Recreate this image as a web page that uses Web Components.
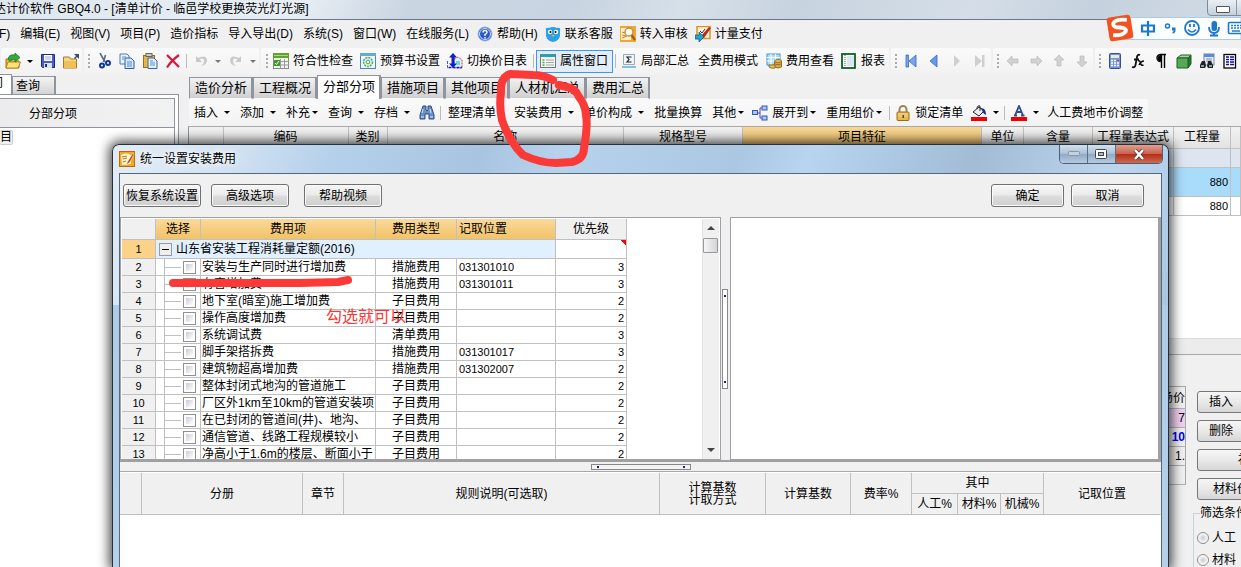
<!DOCTYPE html>
<html lang="zh-CN">
<head>
<meta charset="utf-8">
<title>GBQ4.0</title>
<style>
html,body{margin:0;height:100%;overflow:hidden;background:#f0f0f0}
body{font:12px/16px "Liberation Sans","Noto Sans CJK SC",sans-serif;color:#000}
</style>
</head>
<body>
<budget-app></budget-app>
<script>
const RESET = `*{box-sizing:border-box}button{font:inherit;color:inherit;margin:0;padding:0;border:0;background:none;white-space:nowrap}`;
const define = (name, html) => customElements.define(name, class extends HTMLElement {
  constructor() {
    super();
    this.attachShadow({mode: 'open'});
  }
  connectedCallback() {
    if (this.shadowRoot.childNodes.length) return;
    const t = document.createElement('template');
    t.innerHTML = `<style>${RESET}</style>` + (typeof html === 'function' ? html(this) : html);
    this.shadowRoot.append(t.content.cloneNode(true));
  }
});

/* 16x16 glyph set */
const G = {
open:'<path d="M1 6h5l1 2h7v7H1z" fill="#e9b93a" stroke="#a87414"/><path d="M3 9h12.500l-2.500 6H1z" fill="#ffe27a" stroke="#b8851c"/><path d="M3 6q1-5 7-4V0l5 4.500-5 4.500V6.500q-4-1-5 2z" fill="#2fae3a" stroke="#0b6b18" stroke-width=".7"/>',
save:'<path d="M1.500 1.500h13v13h-12l-1-1z" fill="#4a5cc8" stroke="#1e2a80"/><rect x="4" y="2" width="8" height="6" fill="#fff"/><path d="M5 4h6M5 6h6" stroke="#9aa8d8"/><rect x="4" y="10" width="8" height="5" fill="#dfe4f4"/><rect x="5" y="11" width="2" height="3" fill="#1e2a80"/>',
folder:'<path d="M0.500 4h6l1 2h6v9h-13z" fill="#f6d67e" stroke="#a07c30"/><path d="M1 8h12v7H1z" fill="#f0bf56"/><path d="M11 1h5v5l-2-2-2 2-1-1 2-2z" fill="#3a4a70"/>',
cut:'<path d="M4 0l5 9M9.500 2L7.500 9" stroke="#5a6a88" stroke-width="1.600"/><circle cx="6" cy="12.500" r="2" fill="none" stroke="#123a9a" stroke-width="2"/><circle cx="12" cy="10" r="2" fill="none" stroke="#123a9a" stroke-width="2"/>',
copy:'<path d="M1 1h7l2 2v8H1z" fill="#eaf2fd" stroke="#4a78b8"/><path d="M6 5h6l3 3v7.500H6z" fill="#d6e6fa" stroke="#2e5ea8"/><path d="M3 4h4M3 6h2M8 9h5M8 11h5M8 13h5" stroke="#5a8ed0"/>',
paste:'<rect x="1.500" y="2.500" width="11" height="12" fill="#e8b83c" stroke="#96701a"/><rect x="4" y="0.500" width="6" height="3" fill="#ccc" stroke="#666"/><path d="M6 5h6l3 3v7.500H6z" fill="#e4eefb" stroke="#3a66a8"/><path d="M8 8h3M8 10h5M8 12h5" stroke="#5a8ed0"/>',
del:'<path d="M2 2l12 12M14 2Q6 8 2 14.500" stroke="#d8183a" stroke-width="2.200" fill="none"/>',
undo:'<path d="M3 3v6h6L6.500 6.500Q11 4 11 8q0 3-3 5 6-1 6-6Q13 1 5 5z" fill="#c9c9c9"/>',
redo:'<path d="M13 3v6H7l2.500-2.500Q5 4 5 8q0 3 3 5-6-1-6-6Q3 1 11 5z" fill="#c9c9c9"/>',
check:'<rect x=".5" y=".5" width="15" height="15" fill="#f4f4f4" stroke="#888"/><rect width="16" height="5" fill="#5aa82a"/><path d="M1 2.500h14" stroke="#a8d880"/><path d="M1 8.500h15M1 12h15M7.500 6v10M11.500 6v10" stroke="#999"/><rect x="1" y="7" width="6" height="6" fill="#3c9a28"/><path d="M2 10l1.500 1.500L6 8" stroke="#fff" fill="none"/>',
gear:'<rect x=".5" y=".5" width="15" height="15" fill="#eef6fb" stroke="#4a88c0"/><rect width="16" height="3" fill="#68a8dc"/><circle cx="8" cy="9" r="4.500" fill="#d8f0d8" stroke="#58a868" stroke-width="1.500" stroke-dasharray="2 1"/><circle cx="8" cy="9" r="1.800" fill="#fff" stroke="#58a868"/>',
swap:'<path d="M7 6l4-2 4 3v8H7z" fill="#d8fafa" stroke="#e03050" stroke-dasharray="2 1"/><path d="M6 0l4 4.500H7.500v6H10l-4 4.500-4-4.500h2.500v-6H2z" fill="#1020c8"/><path d="M0 8v6.500h15" fill="none" stroke="#1020c8" stroke-width="1.500" stroke-dasharray="3 1"/><path d="M9 9h4M9 11h4" stroke="#18a8c8"/>',
prop:'<rect x=".5" y="1.500" width="15" height="13" fill="#f8f8f0" stroke="#777"/><rect x="1" y="1" width="14" height="3" fill="#28a0b8"/><path d="M2.500 7h2M2.500 9.500h2M2.500 12h2" stroke="#50a850" stroke-width="1.500"/><path d="M6 7h8M6 9.500h8M6 12h8" stroke="#9aa"/>',
sum:'<path d="M2.500 1.500h11v10h-11z" fill="#eef4f8" stroke="#9ab"/><path d="M1 14h14" stroke="#88c0d8" stroke-width="2"/><path d="M10.500 4H6l2 2.500L6 9h4.500" fill="none" stroke="#222" stroke-width="1.200"/>',
fee:'<rect x="1" y="1" width="13" height="11" fill="#a8e0f4" stroke="#4898c8"/><path d="M1 4.500h13M1 8h13M5 1v11M9.500 1v11" stroke="#fff"/><path d="M8.500 8v6q3.500 2 7 0V8" fill="#d8a848" stroke="#987020"/><ellipse cx="12" cy="8" rx="3.500" ry="1.500" fill="#e8c060" stroke="#987020"/><path d="M9 11q3 1.500 6 0" fill="none" stroke="#987020"/><path d="M3 12v2q3 2 6 1v-3z" fill="#e8c060" stroke="#987020"/>',
report:'<rect x="1" y="1" width="13" height="14" fill="#fff" stroke="#0f6020" stroke-width="1.800"/><path d="M4 2v12" stroke="#2a7a4a" stroke-dasharray="1 1"/><path d="M6 4h7M6 6h7M6 8h7M6 10h7M6 12h7" stroke="#b8cce0"/>',
first:'<path d="M3 2h2.500v12H3zM13 2v12L6 8z" fill="#7aa4ec" stroke="#3468c8" stroke-width=".8"/>',
prev:'<path d="M11 2v12L4 8z" fill="#6a98e8" stroke="#3468c8" stroke-width=".8"/>',
next:'<path d="M5 2v12l6-6z" fill="#cfcfcf"/>',
last:'<path d="M3 2v12l7-6zM10 2h2.500v12H10z" fill="#cfcfcf"/>',
al:'<path d="M2 8l5-5v3h6v4H7v3z" fill="#d2d2d2" stroke="#b4b4b4" stroke-width=".6"/>',
ar:'<path d="M14 8L9 3v3H3v4h6v3z" fill="#d2d2d2" stroke="#b4b4b4" stroke-width=".6"/>',
au:'<path d="M8 2l5 5h-3v6H6V7H3z" fill="#d2d2d2" stroke="#b4b4b4" stroke-width=".6"/>',
ad:'<path d="M8 14l5-5h-3V3H6v6H3z" fill="#d2d2d2" stroke="#b4b4b4" stroke-width=".6"/>',
calc:'<rect x="2.500" y=".5" width="11" height="15" rx="1" fill="#7a96d8" stroke="#34508c"/><rect x="4" y="2" width="8" height="3" fill="#dff0d0"/><path d="M4 7.500h8M4 10h8M4 12.500h8" stroke="#fff" stroke-width="1.500" stroke-dasharray="2 1"/><path d="M10 7.500h2" stroke="#d03050" stroke-width="1.500"/>',
fx:'<path d="M10 2Q7.500 1 7 4L5.500 12q-.5 3-3.500 2M4 6.500h5" fill="none" stroke="#111" stroke-width="1.800"/><path d="M8 8q2-1 2.500 2t3 2M14 8q-3 0-5 4" fill="none" stroke="#111" stroke-width="1.600"/>',
pil:'<path d="M13 1.500H7.500a3.500 3.500 0 000 7M8.500 2v13M11.500 2v13" fill="none" stroke="#000" stroke-width="1.400"/><path d="M8 2a3.200 3.200 0 000 6.400z"/>',
cube:'<path d="M1 5l4-3h10l-3 3z" fill="#a8d8a0" stroke="#1c6020"/><path d="M12 5l3-3v9l-3 4z" fill="#2c7430" stroke="#1c6020"/><path d="M1 5h11v10H1z" fill="#58a858" stroke="#1c6020"/>',
find:'<rect x="5" y="1" width="10" height="11" fill="#e8f0fb" stroke="#6a88b8"/><rect x="5" y="1" width="10" height="3" fill="#5a8ad8"/><path d="M7 6h6M7 8h6" stroke="#88a"/><path d="M3 8h3l1 5-1 2H1v-3zM9 8h3l2 4v3H9l-1-2z" fill="#222"/><path d="M2 13h3M10 13h3" stroke="#9cc" stroke-width="1.500"/>',
list:'<rect x="2" y="1.500" width="11.500" height="13.500" fill="#fff" stroke="#000" stroke-width="1.300"/><path d="M4 4h3M4 6.500h3M4 9h3M4 11.500h3M8 4h4M8 6.500h4M8 9h4M8 11.500h4" stroke="#101090" stroke-width="1.300"/>',
bino:'<path d="M4 1h3v4l1 1 1-1V1h3l3 9v4h-5V9H6v5H1v-4z" fill="#6a90c4" stroke="#2c4c88"/><path d="M3 8l1-4M12 8l-1-4M2 12h3M11 12h3" stroke="#dce8f8"/>',
tree:'<path d="M5 8h3M8 3v10M8 3h3M8 13h3" stroke="#44c" fill="none"/><rect x=".5" y="5.500" width="5" height="4" fill="#a8c8f4" stroke="#3858b0"/><rect x="10" y="1" width="5" height="4" fill="#a8c8f4" stroke="#3858b0"/><rect x="10" y="11" width="5" height="4" fill="#a8c8f4" stroke="#3858b0"/>',
lock:'<path d="M4.500 8V4.500a3.500 3.500 0 017 0V8" fill="none" stroke="#9a8a58" stroke-width="2"/><rect x="2" y="7" width="12" height="8.500" rx="1" fill="#e8b84c" stroke="#9a6c18"/><path d="M3 9h10M3 11h10" stroke="#fbe0a0" stroke-width=".8"/><path d="M7.500 10h1.500v3H7.500z" fill="#543"/>',
fill:'<path d="M2 7l6-5 5 4-5 5z" fill="#eee" stroke="#223"/><path d="M6 4q0-4 3-3v5" stroke="#223" fill="none"/><path d="M10 3q5 0 5 7-3-1-4-5z" fill="#1a2a98"/><rect y="12" width="16" height="4" fill="#f00000"/>',
color:'<path d="M4 10.500L8 1l4 9.500M5.500 7h5M3 10.500h3M10 10.500h3.500" fill="none" stroke="#2e4c8e" stroke-width="1.800"/><rect y="12" width="16" height="4" fill="#f00000"/>',
help:'<circle cx="8" cy="8" r="7" fill="#2858c8" stroke="#9ab4e8"/><circle cx="8" cy="8" r="5.500" fill="none" stroke="#fff" stroke-width=".8"/><path d="M6 6.500Q6 4.500 8 4.500T10 6.500Q10 7.500 8 8.500V10M8 11v1.500" fill="none" stroke="#fff" stroke-width="1.400"/>',
bird:'<path d="M1 5Q0 1 4 2q4-2 8 0 4-1 3 3v5q-1 5-7 6-6-1-7-6z" fill="#2aa0e8"/><circle cx="5" cy="6" r="2.200" fill="#fff"/><circle cx="11" cy="6" r="2.200" fill="#fff"/><circle cx="5.500" cy="6" r="1"/><circle cx="10.500" cy="6" r="1"/><path d="M6.500 9h3L8 11z" fill="#f0c020"/>',
audit:'<rect width="16" height="16" fill="#f0a830"/><path d="M1 2h10v12H1z" fill="#fff0c8"/><circle cx="9" cy="6" r="4" fill="#fffdf4" stroke="#c08840" stroke-width="1.300"/><path d="M11.500 9L15 14" stroke="#a05818" stroke-width="2.200"/><path d="M2 6l3 1M2 9l4 1M2 12l5-2" stroke="#d08020"/>',
pay:'<rect x="2" y=".5" width="13" height="12" fill="#fff4d8" stroke="#e09020" stroke-width="1.500"/><path d="M6 10L14 1l2 1-7 10z" fill="#c02818"/><path d="M0 9h4V6l5 5-5 5v-3H0z" fill="#28a0d0" stroke="#085888" stroke-width=".7"/><path d="M5 5l2 2 3-4" stroke="#333" fill="none"/>',
dlg:'<rect width="16" height="16" rx="1" fill="#f5a623"/><rect x=".5" y=".5" width="15" height="15" fill="none" stroke="#b86c08"/><path d="M2 4q5-3 10 0v9l-9 1z" fill="#fff3cf"/><path d="M3 6l5-1M4 8l4-1M4 11l3-1" stroke="#b07820"/><path d="M14 2L9 10l-2 4 4-3 4-8z" fill="#a84408" stroke="#fff" stroke-width=".5"/>'
};
const svg = n => `<svg width="16" height="16" viewBox="0 0 16 16" aria-hidden="true">${G[n]}</svg>`;

/* button of a menu bar or tool bar: optional icon, slotted label, optional drop arrow */
define('tool-item', el => `<style>
:host{display:block;flex:none}
button{display:flex;align-items:center;height:22px;padding:0 5px}
svg{display:block;flex:none}
:host([icon]) button{padding:0 4px 0 3px;gap:4px}
:host([only]) button{padding:0;width:23px;justify-content:center}
:host([bare]) button{padding:0;width:12px;justify-content:center}
i{border:3px solid transparent;border-top-color:#000;border-bottom:0;width:6px}
:host([dim]) i{border-top-color:#777}
:host([drop]) i{margin-left:6px}
:host([near]) i{margin-left:2px}
:host([icon][near]) button{gap:0;padding-right:5px}
:host([icon][near]) svg{margin-right:4px}
:host([on]) button{border:1px solid #3399ff;background:#e3edf8;height:23px}
</style><button type="button">${el.hasAttribute('icon') ? svg(el.getAttribute('icon')) : ''}${el.hasAttribute('only') || el.hasAttribute('bare') ? '' : '<span><slot></slot></span>'}${['drop','near','bare'].some(a => el.hasAttribute(a)) ? '<i></i>' : ''}</button>`);
define('tool-sep', `<style>:host{display:block;flex:none;width:5px;height:14px;border-right:2px solid transparent;border-left:2px solid transparent;background:#bbb;background-clip:padding-box}</style>`);
define('tool-group', `<style>
:host{display:flex;align-items:center;flex:none;height:100%;background:linear-gradient(#fafafa,#f2f2f2);border-radius:2px}
.g{width:8px;height:16px;flex:none;background:radial-gradient(circle at 5px 2px,#aaa 1px,transparent 1px) 0 0/8px 4px}
:host([plain]) .g{display:none}
</style><div class="g"></div><slot></slot>`);

define('app-title', `<style>
:host{display:block;position:relative;height:20px;border-bottom:1px solid #6b7785;background:linear-gradient(115deg,#dfe7ef 0,#e8eef4 24%,#c9d5e1 33%,#c8d4e1 46%,#d6e0e9 55%,#c7d3df 64%,#d5dee8 78%,#c5d1de 88%,#d2dce6);overflow:hidden}
h1{margin:0 0 0 -6px;font:inherit;line-height:18px;white-space:nowrap}
button{position:absolute;right:-20px;top:-3px;width:54px;height:19px;border:1px solid #7d8a98;border-radius:4px;background:linear-gradient(#eef3f8,#c4d0dc)}
button::before{content:"";position:absolute;left:8px;top:8px;width:12px;height:5px;border:1px solid #555;border-radius:1px;background:#fff}
button::after{content:"";position:absolute;left:28px;top:0;bottom:0;border-left:1px solid #8d99a6}
</style><h1>达计价软件 GBQ4.0 - [清单计价 - 临邑学校更换荧光灯光源]</h1><button aria-label="最小化"></button>`);

define('menu-bar', `<style>
:host{display:flex;align-items:center;height:28px;background:#f0f0f0}
nav{display:flex;margin-left:-10px}
</style><nav><tool-item>(F)</tool-item><tool-item>编辑(E)</tool-item><tool-item>视图(V)</tool-item><tool-item>项目(P)</tool-item><tool-item>造价指标</tool-item><tool-item>导入导出(D)</tool-item><tool-item>系统(S)</tool-item><tool-item>窗口(W)</tool-item><tool-item>在线服务(L)</tool-item><tool-item icon="help">帮助(H)</tool-item><tool-item icon="bird">联系客服</tool-item><tool-item icon="audit">转入审核</tool-item><tool-item icon="pay">计量支付</tool-item></nav>`);

define('main-toolbar', `<style>
:host{display:flex;align-items:center;gap:2px;height:26px;overflow:hidden;padding-left:1px}
.text{padding-left:1px}
</style>
<tool-group plain><tool-item icon="open" only></tool-item><tool-item bare></tool-item><tool-item icon="save" only></tool-item><tool-item icon="folder" only></tool-item></tool-group>
<tool-group><tool-item icon="cut" only></tool-item><tool-item icon="copy" only></tool-item><tool-item icon="paste" only></tool-item><tool-item icon="del" only></tool-item><tool-sep></tool-sep><tool-item icon="undo" only></tool-item><tool-item bare dim></tool-item><tool-item icon="redo" only></tool-item><tool-item bare dim></tool-item></tool-group>
<tool-group class="text"><tool-item icon="check">符合性检查</tool-item><tool-item icon="gear">预算书设置</tool-item><tool-item icon="swap">切换价目表</tool-item><tool-sep></tool-sep><tool-item icon="prop" on>属性窗口</tool-item><tool-sep></tool-sep><tool-item icon="sum">局部汇总</tool-item><tool-item>全费用模式</tool-item><tool-item icon="fee">费用查看</tool-item><tool-item icon="report">报表</tool-item></tool-group>
<tool-group><tool-item icon="first" only></tool-item><tool-item icon="prev" only></tool-item><tool-item icon="next" only></tool-item><tool-item icon="last" only></tool-item></tool-group>
<tool-group><tool-item icon="al" only></tool-item><tool-item icon="ar" only></tool-item><tool-item icon="au" only></tool-item><tool-item icon="ad" only></tool-item></tool-group>
<tool-group><tool-item icon="calc" only></tool-item><tool-item icon="fx" only></tool-item><tool-item icon="pil" only></tool-item><tool-item icon="cube" only></tool-item><tool-item icon="find" only></tool-item><tool-item icon="list" only></tool-item></tool-group>`);

define('side-nav', `<style>
:host{display:flex;flex-direction:column;width:179px;flex:none;padding-top:1px}
.tabs{display:flex;align-items:flex-end;height:19px}
.tabs button{height:18px;width:44px;padding-left:3px;text-align:left;background:linear-gradient(#f4f4f4,#d4d4d4);border:1px solid #8e959e;border-width:1px 2px 0 1px}
.tabs button.on{width:12px;height:20px;background:#fff;border-left:0;padding:0;border-right-width:1px;display:flex;justify-content:flex-end;padding-right:8px;overflow:hidden}
.box{flex:1;border:1px solid #8e959e;border-left:0;border-bottom:0;padding:3px 3px 0 0;background:#fff;display:flex;flex-direction:column}
h2{margin:0;font:inherit;height:30px;line-height:30px;padding-left:29px;background:linear-gradient(90deg,#ececec,#f2f2f2);border:1px solid #8e959e;border-left:0}
ul{margin:0;padding:1px 0;list-style:none;flex:1;border-right:1px solid #8e959e}
li span{display:inline-block;background:#f0f0f0;border:1px solid #ccc;border-left:0;border-radius:2px;line-height:13px}
</style><div class="tabs"><button class="on">间</button><button>查询</button></div><div class="box"><h2>分部分项</h2><ul><li><span>目</span></li></ul></div>`);

define('page-tabs', `<style>
:host{display:flex;align-items:flex-end;height:25px;font-size:13px}
button{height:22px;padding:0 4px 0 5px;background:linear-gradient(#f2f2f2,#cfcfcf);border:1px solid #8e959e;border-right-width:2px;border-bottom-color:#f8f8f8}
button.on{height:24px;background:#fff;padding-bottom:2px;border-bottom:0}
</style><button>造价分析</button><button>工程概况</button><button class="on">分部分项</button><button>措施项目</button><button>其他项目</button><button>人材机汇总</button><button>费用汇总</button>`);

define('bill-toolbar', `<style>:host{display:flex;height:27px}</style>
<tool-group plain><tool-item drop>插入</tool-item><tool-item drop>添加</tool-item><tool-item near>补充</tool-item><tool-item drop>查询</tool-item><tool-item drop>存档</tool-item><tool-item icon="bino" only></tool-item><tool-sep></tool-sep><tool-item near>整理清单</tool-item><tool-item drop>安装费用</tool-item><tool-item drop>单价构成</tool-item><tool-item>批量换算</tool-item><tool-item near>其他</tool-item><tool-item icon="tree" near>展开到</tool-item><tool-item near>重用组价</tool-item><tool-sep></tool-sep><tool-item icon="lock">锁定清单</tool-item><tool-item icon="fill" only></tool-item><tool-item bare></tool-item><tool-sep></tool-sep><tool-item icon="color" only></tool-item><tool-item bare></tool-item><tool-item>人工费地市价调整</tool-item></tool-group>`);

define('bill-table', () => {
  const cols = [['',34],['编码',125],['类别',39],['名称',0],['规格型号',119],['项目特征',239],['单位',42],['含量',69],['工程量表达式',81],['工程量',57],['',10]];
  const row = (c, v) => `<tr class="${c}">${cols.map((_, i) => `<td>${i === 9 ? v : ''}</td>`).join('')}</tr>`;
  return `<style>
:host{display:block;height:212px;background:#fff;border-left:1px solid #8e959e;border-top:1px solid #a8a8a8}
table{border-collapse:collapse;table-layout:fixed;width:100%}
th,td{border-right:1px solid #c0c0c0;border-bottom:1px solid #c0c0c0;padding:0}
th{height:21px;font-weight:400;background:linear-gradient(#f2f2f2,#e2e2e2);white-space:nowrap}
th.o{background:linear-gradient(#f9d795,#eec06c)}
td{text-align:right;padding-right:2px;font-size:11px;height:19px}
.a td{background:#dde5f0}.b td{background:#a9dbfb;height:29px}
</style><table><colgroup>${cols.map(c => `<col${c[1] ? ` style="width:${c[1]}px"` : ''}>`).join('')}</colgroup><thead><tr>${cols.map(c => `<th${c[0] === '项目特征' ? ' class="o"' : ''}>${c[0]}</th>`).join('')}</tr></thead><tbody>${row('a','')}${row('b','880')}${row('c','880')}</tbody></table>`;
});

define('resource-panel', `<style>
:host{display:flex;flex:1;min-height:0;overflow:hidden;border-top:1px solid #ddd;padding-top:16px;background:linear-gradient(#ececec 15px,#a8a8a8 15px,#a8a8a8 16px,#f0f0f0 16px)}
.l{flex:1;padding-top:31px}
table{width:100%;border-collapse:collapse;border:1px solid #a8a8a8;background:#f0f0f0}
th,td{height:19px;padding:0;font-weight:400;text-align:right;border-bottom:1px solid #b0b0b0}
th{height:22px}
.p td{background:#f0d0f0}.q td{color:#00f;font-weight:700}
.r{width:55px;flex:none;padding:36px 0 0 11px;overflow:hidden}
.r>button{display:block;width:90px;height:22px;margin-bottom:7px;padding-left:11px;text-align:left;border:1px solid #777;border-radius:3px;background:linear-gradient(#f6f6f6,#e9e9e9 50%,#d6d6d6)}
.r>button.n{padding-left:40px}.r>button.m{padding-left:15px}
fieldset{margin:-2px 0 0 -4px;padding:6px 0 0 3px;width:90px;min-width:0;border:1px solid #c8d4dc;height:90px}
legend{padding:0;margin-left:3px;height:16px;white-space:nowrap}
label{display:flex;align-items:center;gap:3px;height:22px;white-space:nowrap}
input{appearance:none;margin:0;width:12px;height:12px;border:1px solid #8a8a8a;border-radius:50%;background:radial-gradient(#c8ccd0,#fff 75%)}
</style><div class="l"><table><thead><tr><th>场价</th></tr></thead><tbody><tr class="p"><td>7</td></tr><tr class="q"><td>10</td></tr><tr><td>1.</td></tr><tr><td></td></tr></tbody></table></div>
<div class="r"><button>插入</button><button>删除</button><button class="n">补</button><button class="m">材料价</button><fieldset><legend>筛选条件</legend><label><input type="radio" name="f">人工</label><label><input type="radio" name="f">材料</label></fieldset></div>`);

define('fee-table', () => {
  const rows = [['安装与生产同时进行增加费','措施费用','031301010',3],['有害增加费','措施费用','031301011',3],['地下室(暗室)施工增加费','子目费用','',2],['操作高度增加费','子目费用','',2],['系统调试费','清单费用','',3],['脚手架搭拆费','措施费用','031301017',3],['建筑物超高增加费','措施费用','031302007',2],['整体封闭式地沟的管道施工','子目费用','',2],['厂区外1km至10km的管道安装项','子目费用','',2],['在已封闭的管道间(井)、地沟、','子目费用','',2],['通信管道、线路工程规模较小','子目费用','',2],['净高小于1.6m的楼层、断面小于','子目费用','',2]];
  return `<style>
:host{display:flex;overflow:hidden;background:#fff;border:1px solid #a0a0a8;padding:1px 1px 0 1px}
.t{flex:1;overflow:hidden}
table{border-collapse:separate;border-spacing:0;table-layout:fixed;width:505px}
th,td{padding:0;font-weight:400;white-space:nowrap;overflow:hidden;border-right:1px solid #c0c0c0;border-bottom:1px solid #c0c0c0;height:17px;line-height:16px}
thead th{height:21px;background:linear-gradient(#fad99c,#f2c266)}
thead th.g,tbody th{background:#f0f0f0}
thead th.l{text-align:left;padding-left:2px}
th.n,td.d{font-size:11px}
td.c{text-align:center}td.d{padding-left:2px}td.r{text-align:right;padding-right:2px;font-size:11px}
td.name{padding-left:1px}
.grp>*{height:19px}.grp th{background:#fbd28a}.grp .w{background:#e0f0ff}
.grp .w div{display:flex;align-items:center;gap:4px;padding-left:3px;line-height:18px}
.grp .w button{width:13px;height:13px;border:1px solid #999;background:#eee;position:relative;flex:none}
.grp .w button::before{content:"";position:absolute;left:2px;right:2px;top:5px;border-top:1px solid #000}
.grp .r{background:linear-gradient(225deg,#f00 4px,#fff 4px)}
td.s div{display:flex;align-items:center;margin-left:8px;border-left:1px solid #c0c0c0;height:16px}
td.s div::before{content:"";width:16px;border-top:1px solid #c0c0c0;margin-right:2px}
input{appearance:none;margin:0;width:13px;height:13px;border:1px solid #8e8f8f;background:linear-gradient(135deg,#c8ccd4,#fff) content-box #f4f4f4;padding:2px}
.sb{width:17px;flex:none;background:#f0f0f0;display:flex;flex-direction:column;align-items:center;border-left:1px solid #e4e4e4}
.sb i{border:4px solid transparent;border-bottom-color:#444;border-top:0;margin:7px 0 8px}
.sb b{width:15px;height:15px;border:1px solid #999;border-radius:1px;background:linear-gradient(90deg,#f6f6f6,#d4d4d8);flex:none}
.sb i.dn{border:4px solid transparent;border-top-color:#444;border-bottom:0;margin:auto 0 7px}
</style><div class="t"><table><colgroup><col style="width:34px"><col style="width:45px"><col style="width:175px"><col style="width:81px"><col style="width:99px"><col style="width:71px"></colgroup>
<thead><tr><th class="g"></th><th>选择</th><th>费用项</th><th>费用类型</th><th class="l">记取位置</th><th class="g">优先级</th></tr></thead>
<tbody><tr class="grp"><th class="n">1</th><td class="w" colspan="4"><div><button aria-label="折叠"></button>山东省安装工程消耗量定额(2016)</div></td><td class="r"></td></tr>
${rows.map((r, i) => `<tr><th class="n">${i + 2}</th><td class="s"><div><input type="checkbox" aria-label="${r[0]}"></div></td><td class="name">${r[0]}</td><td class="c">${r[1]}</td><td class="d">${r[2]}</td><td class="r">${r[3]}</td></tr>`).join('')}</tbody></table></div>
<div class="sb"><i></i><b></b><i class="dn"></i></div>`;
});

define('rule-table', `<style>
:host{display:block;flex:1;background:#fff;border-top:1px solid #a8a8a8;padding:1px 0 0}
table{border-collapse:separate;border-spacing:0;table-layout:fixed;width:100%}
th{padding:0;font-weight:400;background:#f0f0f0;border-right:1px solid #c0c0c0;border-bottom:1px solid #c0c0c0;height:21px;line-height:12px;white-space:nowrap}
th:last-child{border-right-color:#f0f0f0}tr+tr th:last-child{border-right-color:#c0c0c0}
</style><table><colgroup><col style="width:22px"><col style="width:161px"><col style="width:41px"><col><col style="width:106px"><col style="width:85px"><col style="width:61px"><col style="width:46px"><col style="width:43px"><col style="width:43px"><col style="width:117px"></colgroup>
<thead><tr><th rowspan="2"></th><th rowspan="2">分册</th><th rowspan="2">章节</th><th rowspan="2">规则说明(可选取)</th><th rowspan="2">计算基数<br>计取方式</th><th rowspan="2">计算基数</th><th rowspan="2">费率%</th><th colspan="3">其中</th><th rowspan="2">记取位置</th></tr><tr><th>人工%</th><th>材料%</th><th>机械%</th></tr></thead></table>`);

define('push-button', `<style>:host{display:block;width:78px}:host([small]){width:73px}
button{display:block;width:100%;height:23px;border:1px solid #707070;border-radius:3px;background:linear-gradient(#f6f6f6,#ebebeb 48%,#dcdcdc 52%,#cfcfcf);box-shadow:inset 0 0 0 1px #fbfbfb}</style><button type="button"><slot></slot></button>`);

define('fee-dialog', `<style>
:host{display:flex;flex-direction:column;border:1px solid #26303a;border-bottom:0;border-radius:7px 7px 0 0;padding:0 6px;box-shadow:0 0 12px 3px rgba(0,0,0,.7);background:linear-gradient(115deg,#e2ecf6 0,#d5e4f3 10%,#b4d0ea 20%,#a9c4e0 33%,#b6d2ec 40%,#abc7e2 56%,#b8d4ee 62%,#a2bcd6 77%,#bcd6ee 90%,#a8c6e4) 0 0/100% 160px no-repeat,linear-gradient(#a9c9e9,#b4d0ea)}
header{display:flex;align-items:center;gap:5px;height:28px;position:relative;flex:none}
h2{font:inherit;margin:0;text-shadow:0 0 6px #fff,0 0 6px #fff}
.win{position:absolute;right:-1px;top:0;display:flex;height:19px;border:1px solid #4c5e72;border-top:0;border-radius:0 0 5px 5px;overflow:hidden}
.win button{width:28px;background:linear-gradient(#d3e1ef,#a9bed4 50%,#90a9c4 50%,#b6cbe0);border-right:1px solid #5c6e84;display:flex;align-items:center;justify-content:center}
.win .x{width:46px;border:0;background:linear-gradient(#e0a090,#c9604c 50%,#b02c18 50%,#d06a50)}
main{flex:1;min-height:0;display:flex;flex-direction:column;background:#f0f0f0;border:1px solid #56677a;border-bottom:0}
.bar{display:flex;height:43px;padding:10px 17px 0 3px;flex:none}
.bar push-button{margin-right:10px}.bar push-button.w{margin-right:15px}.bar push-button.s{margin-right:7px}.bar push-button.e{margin-right:0}
.bar hr{flex:1;border:0;margin:0}
.split{display:flex;height:245px;flex:none;border-right:2px solid #a0a0a0;border-bottom:2px solid #a0a0a0}
fee-table{flex:1 1 602px}
.v{width:9px;flex:none;display:flex;align-items:center;justify-content:center}
.v i{width:6px;height:100px;border:1px solid #888;background:radial-gradient(circle at 2px 6px,#226 1px,transparent 1px),radial-gradient(circle at 2px 92px,#226 1px,#fff 1px)}
.pane{flex:1 1 430px;background:#fff;border:1px solid #a0a0a8}
.h{height:9px;flex:none;display:flex;justify-content:center;align-items:center}
.h i{width:100px;height:6px;border:1px solid #888;background:radial-gradient(circle at 6px 2px,#226 1px,transparent 1px),radial-gradient(circle at 92px 2px,#226 1px,#f4f4f4 1px)}
</style><header>${svg('dlg')}<h2>统一设置安装费用</h2><div class="win"><button aria-label="最小化"><svg width="12" height="6"><rect x=".5" y=".5" width="11" height="4" rx="1" fill="#c4d2e0" stroke="#8797a8"/></svg></button><button aria-label="最大化"><svg width="13" height="11"><rect x=".5" y=".5" width="11" height="9" rx="1" fill="#fff" stroke="#445"/><rect x="3.500" y="3.500" width="5" height="3" fill="#a9bed4" stroke="#445"/></svg></button><button class="x" aria-label="关闭"><svg width="12" height="11"><path d="M2 1l8 9M10 1L2 10" stroke="#533" stroke-width="4"/><path d="M2 1l8 9M10 1L2 10" stroke="#fff" stroke-width="2.500"/></svg></button></div></header>
<main><div class="bar"><push-button>恢复系统设置</push-button><push-button class="w">高级选项</push-button><push-button>帮助视频</push-button><hr><push-button small class="s">确定</push-button><push-button small class="e">取消</push-button></div>
<div class="split"><fee-table></fee-table><div class="v"><i></i></div><div class="pane"></div></div><div class="h"><i></i></div><rule-table></rule-table></main>`);

define('ime-bar', `<style>:host{display:block}svg{display:block}</style>
<svg width="136" height="32" viewBox="0 0 136 32"><path d="M18 4.500h118v22H18z" fill="#fbfdff" stroke="#a9cbe6"/>
<g transform="rotate(-9 15 15)"><rect x="3" y="3" width="24" height="24" rx="3" fill="#f4511e"/><path d="M23 8Q12 5 9 9.500 8 13.500 15 14.500 22 16 20 19.500 16 23 7 21" fill="none" stroke="#fff" stroke-width="3.800"/></g>
<g stroke="#1c78cc" fill="none" stroke-width="2.200"><path d="M37 12.500h12v6H37zM43 8v15"/><circle cx="62.500" cy="13" r="2" stroke-width="1.500"/><circle cx="87" cy="15" r="7" stroke-width="1.800"/><path d="M83 16.500q4 5 8 0" stroke-width="1.500"/><path d="M85 11v3M89 11v3" stroke-width="1.800"/><path d="M104 14q0 6 5 6t5-6M109 20v3M105 22.500h8" stroke-width="1.800"/></g>
<path d="M67 14.500h3.500v3q0 2.500-3 3v-1.500q1.200-.5 1.200-1.500H67z" fill="#1c78cc"/><rect x="106.500" y="8" width="5.500" height="10" rx="2.500" fill="#1c78cc"/>
<rect x="123.500" y="9.500" width="18" height="11" rx="1" fill="#fff" stroke="#1c78cc" stroke-width="1.600"/><path d="M126 12.500h10M126 15h10" stroke="#1c78cc" stroke-width="1.500" stroke-dasharray="2 1"/><path d="M127 18h8" stroke="#1c78cc" stroke-width="1.500"/></svg>`);

/* red marker notes drawn freely over the windows */
define('marker-notes', `<style>:host{display:block;pointer-events:none}svg{display:block}
p{position:absolute;left:326px;top:307px;margin:0;font-size:16px;line-height:20px;color:#f33;white-space:nowrap}</style>
<svg width="620" height="300" viewBox="0 0 620 300"><g fill="none" stroke="#fb3a38" stroke-width="8" stroke-linecap="round" stroke-linejoin="round"><path d="M553 80Q543 75 533 75L510 74Q500 78 501 92 499 106 502 120 510 143 523 155 540 163 556 163L572 162Q584 159 584 148 588 126 586 115 585 104 579 97 575 88 567 87L559 85"/><path d="M173 283L300 283 338 282 348 280"/></g></svg><p>勾选就可以</p>`);

define('budget-app', `<style>
:host{display:flex;flex-direction:column;height:100vh;position:relative;overflow:hidden;background:#f0f0f0}
.body{flex:1;min-height:0;display:flex;gap:9px}
.work{flex:1;min-width:0;display:flex;flex-direction:column}
page-tabs,bill-toolbar{margin-left:1px}
fee-dialog{position:absolute;left:112px;right:72px;top:144px;bottom:0}
ime-bar{position:absolute;right:0;top:13px}
marker-notes{position:absolute;left:0;top:0}
</style><app-title></app-title><menu-bar></menu-bar><main-toolbar></main-toolbar>
<div class="body"><side-nav></side-nav><div class="work"><page-tabs></page-tabs><bill-toolbar></bill-toolbar><bill-table></bill-table><resource-panel></resource-panel></div></div>
<fee-dialog></fee-dialog><ime-bar></ime-bar><marker-notes></marker-notes>`);
</script>
</body>
</html>
